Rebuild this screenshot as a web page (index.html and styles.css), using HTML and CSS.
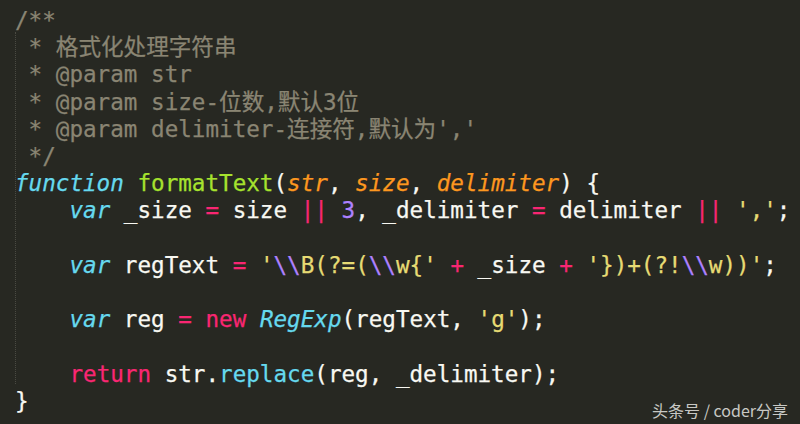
FILE: index.html
```html
<!DOCTYPE html>
<html lang="zh">
<head>
<meta charset="utf-8">
<title>formatText</title>
<link rel="stylesheet" href="styles.css">
</head>
<body>
<div class="editor">
<div class="guide"></div>
<pre class="code"><span class="c">/**</span>
<span class="c"> * 格式化处理字符串</span>
<span class="c"> * @param str</span>
<span class="c"> * @param size-位数,默认3位</span>
<span class="c"> * @param delimiter-连接符,默认为','</span>
<span class="c"> */</span>
<span class="kw">function</span> <span class="fn">formatText</span>(<span class="pa">str</span>, <span class="pa">size</span>, <span class="pa">delimiter</span>) {
    <span class="kw">var</span> _size <span class="op">=</span> size <span class="op">||</span> <span class="num">3</span>, _delimiter <span class="op">=</span> delimiter <span class="op">||</span> <span class="s">','</span>;

    <span class="kw">var</span> regText <span class="op">=</span> <span class="s">'<span class="num">\\</span>B(?=(<span class="num">\\</span>w{'</span> <span class="op">+</span> _size <span class="op">+</span> <span class="s">'})+(?!<span class="num">\\</span>w))'</span>;

    <span class="kw">var</span> reg <span class="op">=</span> <span class="op">new</span> <span class="kw">RegExp</span>(regText, <span class="s">'g'</span>);

    <span class="op">return</span> str.<span class="sup">replace</span>(reg, _delimiter);
}</pre>
<div class="mark">头条号 / coder分享</div>
</div>
</body>
</html>
```
FILE: styles.css
```css
html, body {
  margin: 0;
  padding: 0;
  background: #272822;
}
.editor {
  position: relative;
  width: 800px;
  height: 424px;
  overflow: hidden;
  background: #272822;
}
.code {
  margin: 0;
  padding: 7px 0 0 15px;
  font-family: "DejaVu Sans Mono", "Noto Sans CJK SC", monospace;
  font-size: 22.6px;
  line-height: 27.2px;
  color: #f8f8f2;
  white-space: pre;
  -webkit-text-stroke: 0.25px currentColor;
}
.guide {
  position: absolute;
  left: 15px;
  top: 32px;
  height: 352px;
  width: 0;
  border-left: 1px dotted #4a4a42;
}
.c { color: #8a8573; }
.kw { color: #66d9ef; font-style: italic; }
.sup { color: #66d9ef; }
.fn { color: #a6e22e; }
.pa { color: #fd971f; font-style: italic; }
.op { color: #f92672; }
.num { color: #ae81ff; }
.s { color: #e6db74; }
.mark {
  position: absolute;
  right: 12px;
  bottom: 3px;
  font-family: "Noto Sans CJK SC", "Noto Sans", sans-serif;
  font-size: 16px;
  line-height: 22px;
  color: #c8c8c4;
}
```
